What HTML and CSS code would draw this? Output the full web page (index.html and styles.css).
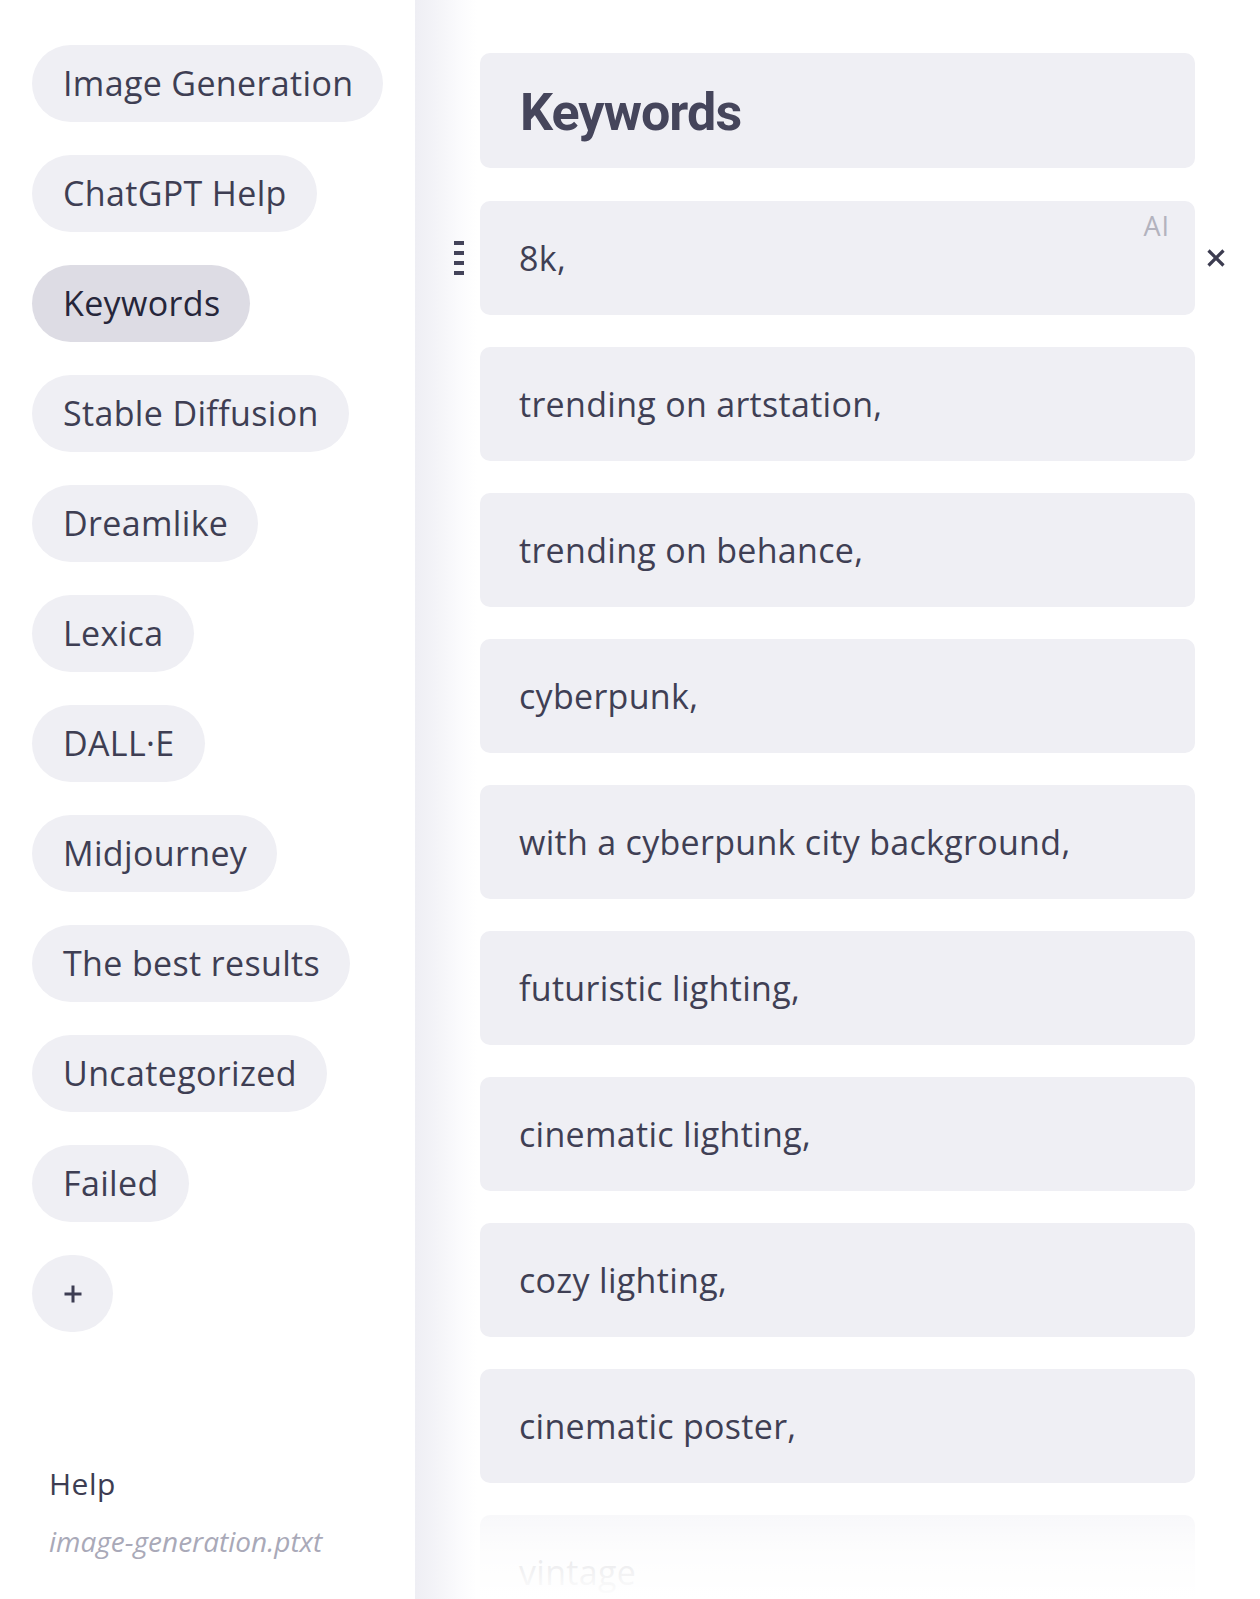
FILE: index.html
```html
<!DOCTYPE html>
<html lang="en">
<head>
<meta charset="utf-8">
<title>Keywords</title>
<link rel="stylesheet" href="styles.css">
</head>
<body>
<div class="app">
  <aside class="sidebar">
    <nav class="pills">
      <a class="pill">Image Generation</a>
      <a class="pill">ChatGPT Help</a>
      <a class="pill active">Keywords</a>
      <a class="pill">Stable Diffusion</a>
      <a class="pill">Dreamlike</a>
      <a class="pill">Lexica</a>
      <a class="pill">DALL·E</a>
      <a class="pill">Midjourney</a>
      <a class="pill">The best results</a>
      <a class="pill">Uncategorized</a>
      <a class="pill">Failed</a>
      <a class="pill add" aria-label="Add">
        <svg width="20" height="20" viewBox="0 0 20 20"><path d="M10 1.5V18.5M1.5 10H18.5" stroke="#3d3d52" stroke-width="3" fill="none"/></svg>
      </a>
    </nav>
    <div class="footer">
      <div class="help">Help</div>
      <div class="file">image-generation.ptxt</div>
    </div>
  </aside>
  <main class="main">
    <div class="header">Keywords</div>
    <div class="list">
      <div class="row">
        <div class="handle"><span></span><span></span><span></span><span></span></div>
        <div class="card"><span class="ai">AI</span>8k,</div>
        <div class="close">
          <svg width="20" height="18" viewBox="0 0 20 18"><path d="M2.5 1.5L17.5 16.5M17.5 1.5L2.5 16.5" stroke="#3c3c50" stroke-width="3.2" fill="none"/></svg>
        </div>
      </div>
      <div class="row"><div></div><div class="card">trending on artstation,</div></div>
      <div class="row"><div></div><div class="card">trending on behance,</div></div>
      <div class="row"><div></div><div class="card">cyberpunk,</div></div>
      <div class="row"><div></div><div class="card">with a cyberpunk city background,</div></div>
      <div class="row"><div></div><div class="card">futuristic lighting,</div></div>
      <div class="row"><div></div><div class="card">cinematic lighting,</div></div>
      <div class="row"><div></div><div class="card">cozy lighting,</div></div>
      <div class="row"><div></div><div class="card">cinematic poster,</div></div>
      <div class="row"><div></div><div class="card">vintage</div></div>
    </div>
    <div class="fade"></div>
  </main>
</div>
</body>
</html>
```
FILE: styles.css
```css
* { box-sizing: border-box; }
html, body { margin: 0; padding: 0; }
body {
  font-family: "Open Sans", "Noto Sans", sans-serif;
  color: #3f3f54;
  background: #fff;
}
.app {
  display: flex;
  height: 100vh;
  overflow: hidden;
}
.sidebar {
  width: 415px;
  flex: 0 0 415px;
  display: flex;
  flex-direction: column;
  background: #fff;
}
.pills {
  display: flex;
  flex-direction: column;
  align-items: flex-start;
  gap: 33px;
  padding: 45px 0 0 32px;
}
.pill {
  display: inline-flex;
  align-items: center;
  height: 77px;
  padding: 0 30px 0 31px;
  border-radius: 39px;
  background: #efeff4;
  color: #3e3e53;
  font-size: 34px;
  line-height: 77px;
  letter-spacing: 0.35px;
  white-space: nowrap;
}
.pill.active {
  background: #dddce4;
  color: #26263a;
}
.pill.add {
  width: 81px;
  padding: 0;
  justify-content: center;
}
.pill.add svg { display: block; }
.footer {
  margin-top: auto;
  padding: 0 0 40px 49px;
  font-size: 28px;
  line-height: 36px;
}
.help {
  color: #3d3d52;
  font-size: 30px;
  letter-spacing: 0.5px;
}
.file {
  margin-top: 21px;
  color: #a9a9b8;
  font-style: italic;
}
.main {
  position: relative;
  flex: 1;
  padding-top: 53px;
  background: linear-gradient(to right, #eeeef4 0, #f4f4f8 22px, #fbfbfd 45px, #fff 62px);
  overflow: hidden;
}
.header {
  margin-left: 65px;
  width: 715px;
  height: 115px;
  border-radius: 10px;
  background: #efeff4;
  padding: 4px 0 0 40px;
  display: flex;
  align-items: center;
  font-family: Roboto, "Open Sans", sans-serif;
  font-size: 52px;
  font-weight: 700;
  letter-spacing: -0.9px;
  color: #45455b;
}
.list {
  display: flex;
  flex-direction: column;
  gap: 32px;
  margin-top: 33px;
}
.row {
  display: grid;
  grid-template-columns: 65px 715px auto;
  align-items: center;
}
.card {
  position: relative;
  height: 114px;
  border-radius: 10px;
  background: #efeff4;
  padding-left: 39px;
  display: flex;
  align-items: center;
  font-size: 34px;
  letter-spacing: 0.3px;
  color: #3f3f54;
  white-space: nowrap;
}
.ai {
  position: absolute;
  top: 11px;
  right: 25px;
  font-size: 27px;
  line-height: 27px;
  letter-spacing: 1px;
  color: #b3b3be;
}
.handle {
  justify-self: end;
  margin-right: 16px;
  display: flex;
  flex-direction: column;
  gap: 6px;
}
.handle span {
  display: block;
  width: 10px;
  height: 4px;
  background: #44445a;
}
.close {
  margin-left: 11px;
  display: flex;
  align-items: center;
}
.close svg { display: block; }
.fade {
  position: absolute;
  left: 60px;
  right: 0;
  bottom: 0;
  height: 115px;
  background: linear-gradient(to bottom, rgba(255,255,255,0) 0%, rgba(255,255,255,0.55) 25%, rgba(255,255,255,0.88) 60%, #fff 100%);
  pointer-events: none;
}
```
